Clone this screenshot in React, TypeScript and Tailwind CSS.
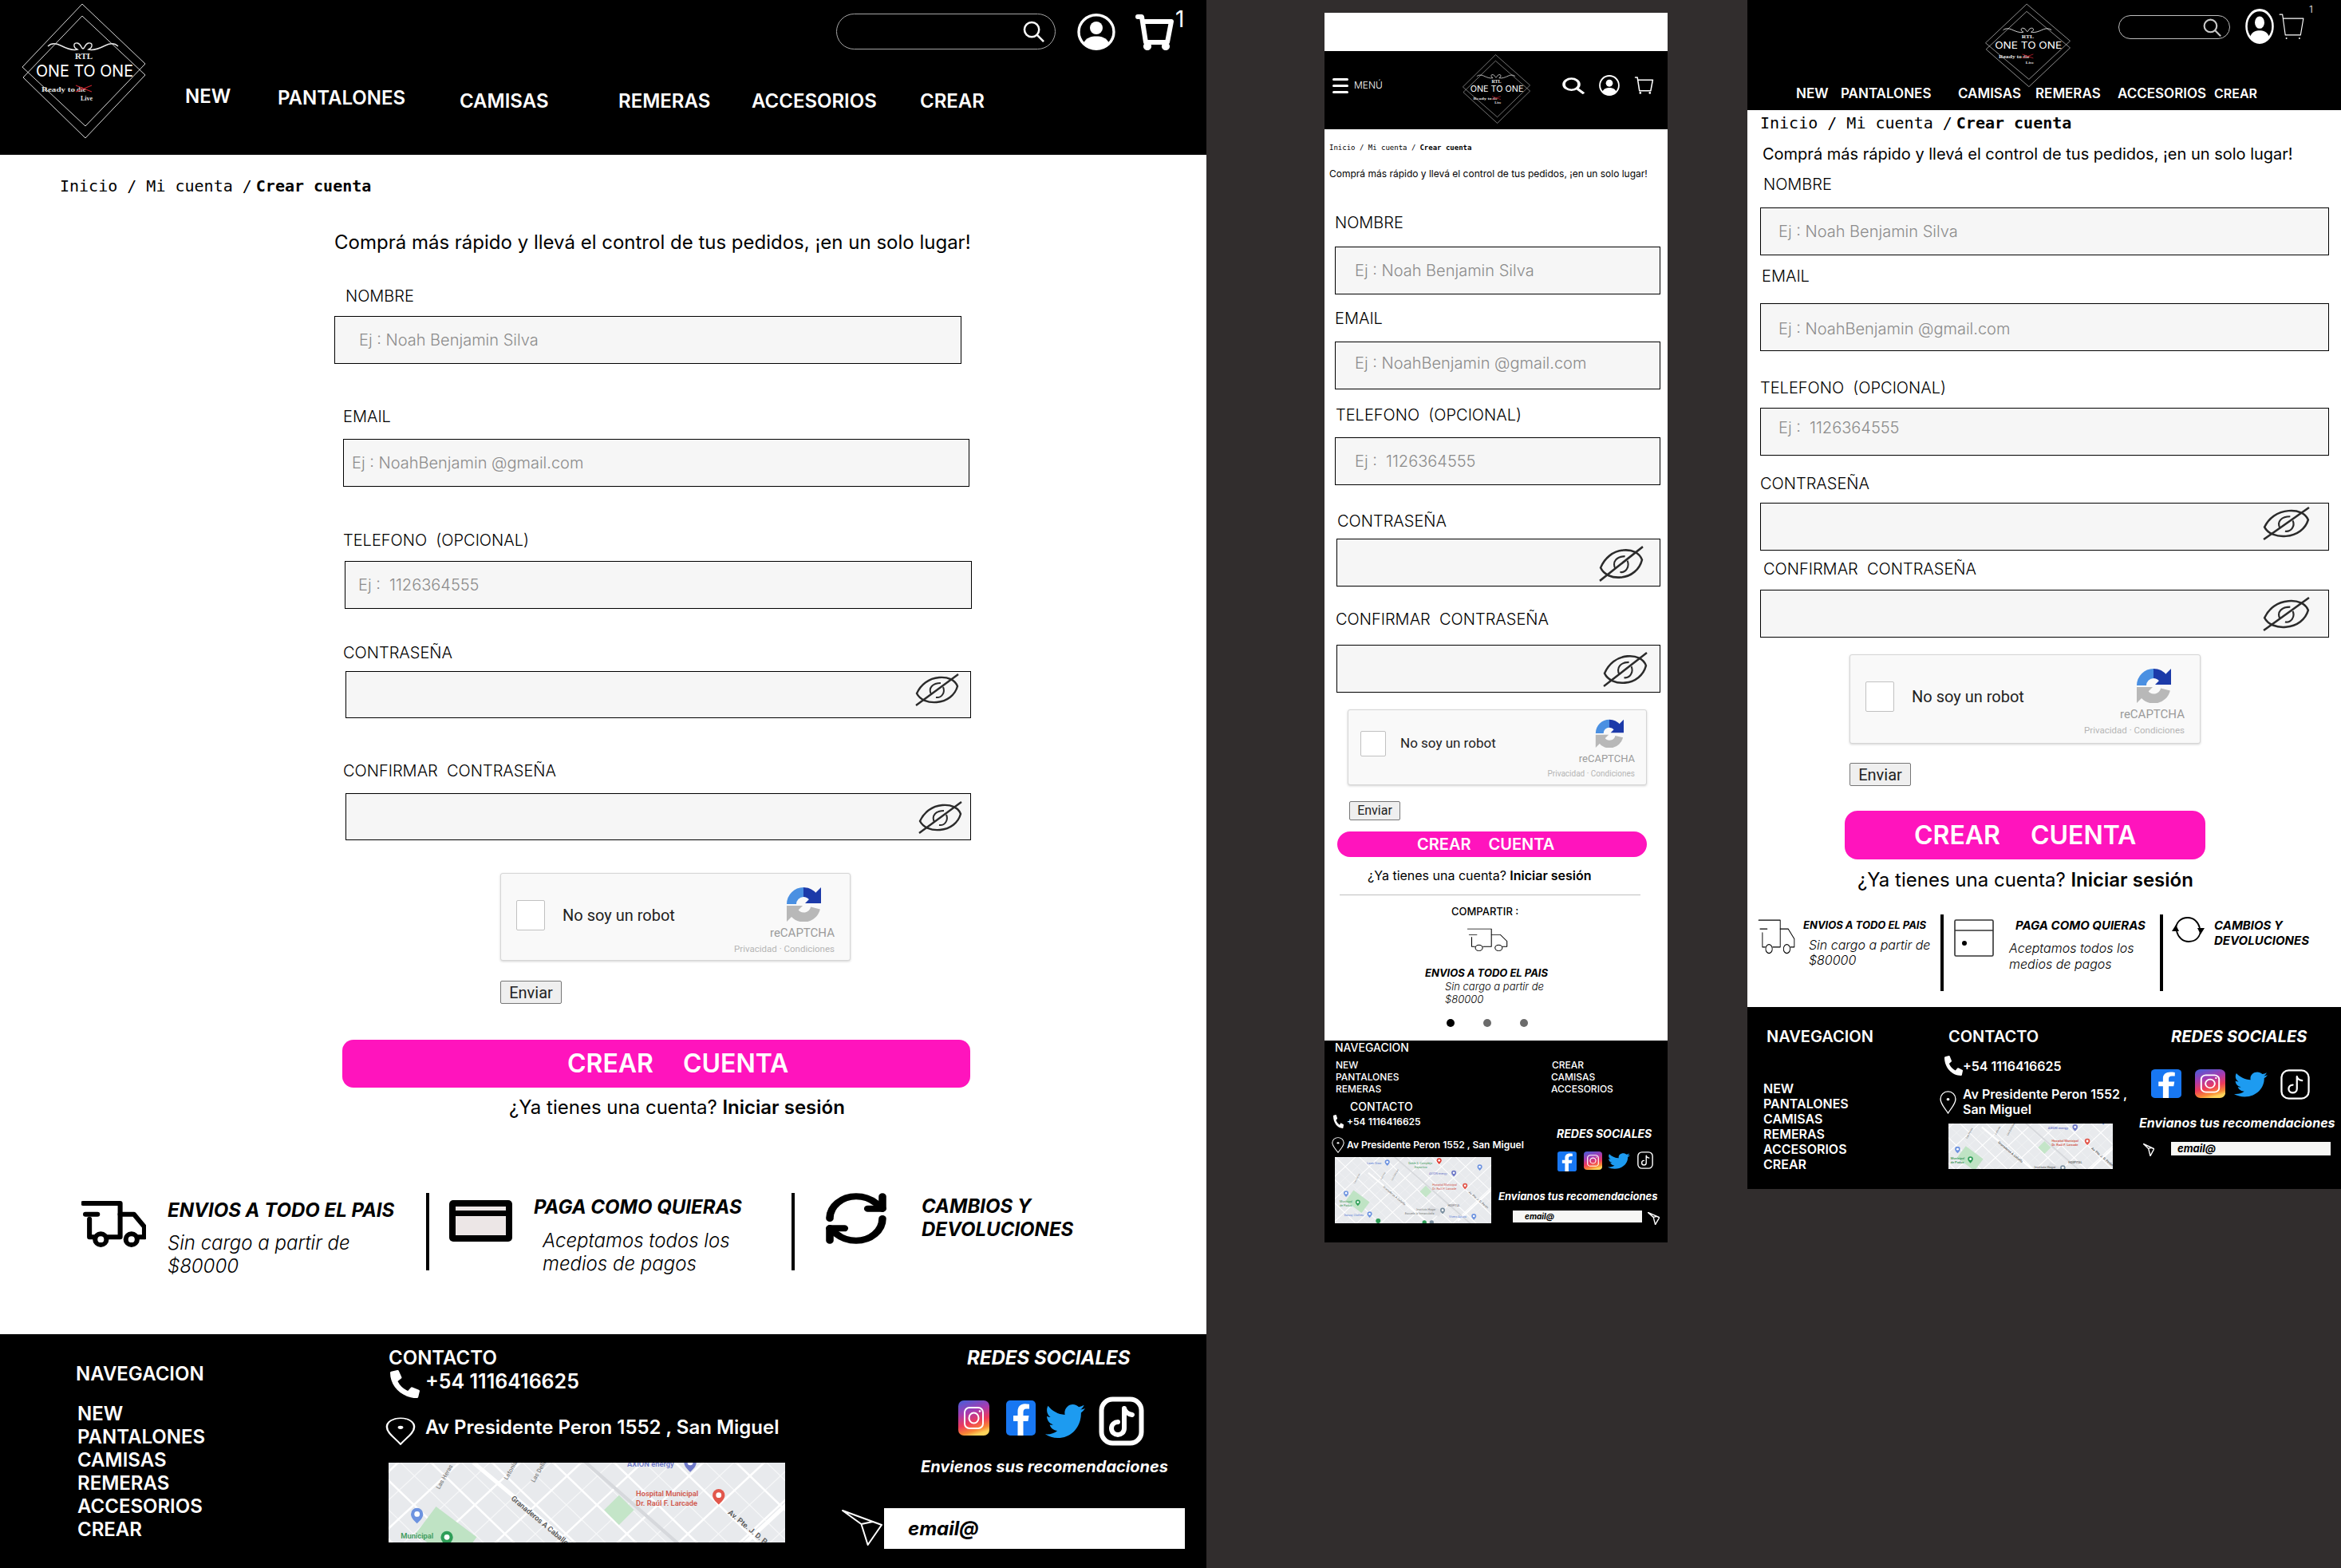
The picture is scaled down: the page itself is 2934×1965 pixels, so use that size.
import { useId } from "react";
import { FaPhoneAlt } from "react-icons/fa";
import { FaTwitter } from "react-icons/fa";
import { RefreshCw } from "lucide-react";

const MONO = "[font-family:'DejaVu_Sans_Mono',monospace]";

function Logo({ className }: { className: string }) {
  return (
    <svg viewBox="0 0 170 180" preserveAspectRatio="none" className={className}>
      <polygon points="83,5 162,80 87,158 8,84" fill="none" stroke="#d8d8d8" strokeWidth="1" />
      <polygon points="83,20 162,94 87,173 9,97" fill="none" stroke="#d8d8d8" strokeWidth="1" />
      <path
        d="M40 58c4-4 10-4 16-1s14 7 21 5c-6-3-5-9 0-8s4 6 7 7c3-1 2-6 7-7s6 5 0 8c7 2 15-2 21-5s12-3 16 1"
        fill="none"
        stroke="#e8e8e8"
        strokeWidth="1.4"
      />
      <text x="85" y="74" textAnchor="middle" fontSize="11" fontWeight="700" fill="#e8e8e8" fontFamily="'Liberation Serif',serif">
        RTL
      </text>
      <text x="86" y="96" textAnchor="middle" fontSize="20" textLength="122" lengthAdjust="spacingAndGlyphs" fill="#fff" fontFamily="'Inter',sans-serif">
        ONE TO ONE
      </text>
      <text x="32" y="115" fontSize="9" fontWeight="700" textLength="42" lengthAdjust="spacingAndGlyphs" fill="#e0e0e0" fontFamily="'Liberation Serif',serif">
        Ready to
      </text>
      <text x="76" y="115" fontSize="9" fontWeight="700" fill="#d8d8d8" fontFamily="'Liberation Serif',serif">
        die
      </text>
      <path d="M75 107l20 8M75 115l20-8" stroke="#c8202c" strokeWidth="1.2" />
      <text x="81" y="126" fontSize="8" fontWeight="700" fill="#e0e0e0" fontFamily="'Liberation Serif',serif">
        Live
      </text>
    </svg>
  );
}

function SearchIcon({ className, width = 2.6, color = "#fff" }: { className: string; width?: number; color?: string }) {
  return (
    <svg viewBox="0 0 28 28" preserveAspectRatio="none" className={className}>
      <circle cx="11.5" cy="11.5" r="9.5" fill="none" stroke={color} strokeWidth={width} />
      <path d="M18 18l9 9" stroke={color} strokeWidth={width} />
    </svg>
  );
}

function UserIcon({ className }: { className: string }) {
  return (
    <svg viewBox="0 0 48 46" preserveAspectRatio="none" className={className}>
      <ellipse cx="24" cy="23" rx="22" ry="21.2" fill="none" stroke="#fff" strokeWidth="3.4" />
      <ellipse cx="24" cy="18" rx="8" ry="8" fill="#fff" />
      <path d="M8 37c3-7 10-8.500 16-8.500s13 1.500 16 8.500c-4 5-10 8-16 8s-12-3-16-8z" fill="#fff" />
    </svg>
  );
}

function CartIcon({ className, width = 5 }: { className: string; width?: number }) {
  return (
    <svg viewBox="0 0 48 46" preserveAspectRatio="none" className={className}>
      <path d="M3 4h5l5 32h27l5-26H10" fill="none" stroke="#fff" strokeWidth={width} strokeLinejoin="round" strokeLinecap="round" />
      <circle cx="15" cy="41" r={width * 0.85} fill="#fff" />
      <circle cx="38" cy="41" r={width * 0.85} fill="#fff" />
    </svg>
  );
}

function EyeOff({ className }: { className: string }) {
  return (
    <svg viewBox="0 0 55 41" preserveAspectRatio="none" className={className}>
      <path d="M2 25c5-11 15-19 28-20 11-1 20 3 23 11-3 11-13 19-26 20C16 37 6 33 2 25z" fill="none" stroke="#2b2b2b" strokeWidth="2.400" />
      <path d="M1 40L54 1" stroke="#2b2b2b" strokeWidth="2.400" />
      <path d="M20 26c-4-8 2-14 12-14M35 17c3 7-2 14-9 13" fill="none" stroke="#2b2b2b" strokeWidth="2" />
    </svg>
  );
}

function TruckIcon({ className, width }: { className: string; width: number }) {
  return (
    <svg viewBox="0 0 80 60" preserveAspectRatio="none" className={className}>
      <g fill="none" stroke="#000" strokeWidth={width} strokeLinecap="round" strokeLinejoin="round">
        <path d="M2 4h46v43H32" />
        <path d="M5 18h15" />
        <path d="M10 24v23h6" />
        <path d="M48 18h17l13 16v13h-8" />
        <circle cx="24" cy="50" r="7" />
        <circle cx="62" cy="50" r="7" />
      </g>
    </svg>
  );
}

function CardSolid({ className }: { className: string }) {
  return (
    <svg viewBox="0 0 79 52" preserveAspectRatio="none" className={className}>
      <rect width="79" height="52" rx="5" fill="#000" />
      <rect x="8" y="8" width="63" height="5" fill="#ece6e6" />
      <rect x="8" y="20" width="63" height="24" fill="#ece6e6" />
    </svg>
  );
}

function CardOutline({ className }: { className: string }) {
  return (
    <svg viewBox="0 0 50 47" preserveAspectRatio="none" className={className}>
      <rect x="1" y="1" width="48" height="45" rx="1.500" fill="none" stroke="#333" strokeWidth="1.600" />
      <path d="M1 14h48" stroke="#333" strokeWidth="1.600" />
      <circle cx="13" cy="30" r="3" fill="#000" />
    </svg>
  );
}

function RefreshThin({ className }: { className: string }) {
  return (
    <svg viewBox="0 0 41 34" preserveAspectRatio="none" className={className}>
      <g fill="none" stroke="#000" strokeWidth="1.800">
        <path d="M5 17c0-9 6-15 15-15 7 0 13 5 15 13" />
        <path d="M36 17c0 9-6 15-15 15-7 0-13-5-15-13" />
      </g>
      <path d="M0 19l5-8 4 8zM32 15l9 0-5 8z" fill="#000" />
    </svg>
  );
}

function Instagram({ className }: { className: string }) {
  const id = useId();
  return (
    <svg viewBox="0 0 39 44" preserveAspectRatio="none" className={className}>
      <defs>
        <linearGradient id={id} x1="0.2" y1="0" x2="0.5" y2="1">
          <stop offset="0" stopColor="#4f5bd5" />
          <stop offset="0.35" stopColor="#a83bb0" />
          <stop offset="0.65" stopColor="#ee3a5a" />
          <stop offset="0.88" stopColor="#f98a35" />
          <stop offset="1" stopColor="#fdd35a" />
        </linearGradient>
      </defs>
      <rect width="39" height="44" rx="7" fill={`url(#${id})`} />
      <rect x="8" y="9" width="23" height="26" rx="6" fill="none" stroke="#fff" strokeWidth="2" />
      <ellipse cx="19.500" cy="22" rx="6" ry="6.500" fill="none" stroke="#fff" strokeWidth="2" />
      <circle cx="27" cy="13.500" r="1.300" fill="#fff" />
    </svg>
  );
}

function Facebook({ className }: { className: string }) {
  return (
    <svg viewBox="0 0 37 44" preserveAspectRatio="none" className={className}>
      <rect width="37" height="44" rx="5" fill="#1877f2" />
      <path d="M21.500 44V26h6l1-7h-7v-4c0-3 1-4.500 4-4.500h3.500V4.800C27 4.500 25 4.300 23.500 4.300 18 4.300 14.500 8 14.500 13.500V19H9v7h5.500v18z" fill="#fff" />
    </svg>
  );
}

function Twitter({ className }: { className: string }) {
  return <FaTwitter className={className} color="#1d9bf0" preserveAspectRatio="none" />;
}

function Tiktok({ className, width }: { className: string; width: number }) {
  return (
    <svg viewBox="0 0 57 62" preserveAspectRatio="none" className={className}>
      <rect x={width / 2 + 0.5} y={width / 2 + 0.5} width={56 - width} height={61 - width} rx="14" fill="none" stroke="#fff" strokeWidth={width} />
      <path
        d="M32 15v25c0 5-4 8-8 8s-8-3-8-8 4-8 8-8M32 15c1 4 5 7 10 8"
        fill="none"
        stroke="#fff"
        strokeWidth={width}
        strokeLinecap="round"
      />
    </svg>
  );
}

function PinIcon({ className }: { className: string }) {
  return (
    <svg viewBox="0 0 20 30" preserveAspectRatio="none" className={className}>
      <path d="M10 29C6 22 1 17 1 10.500 1 5 5 1 10 1s9 4 9 9.500C19 17 14 22 10 29z" fill="none" stroke="#fff" strokeWidth="1.300" />
      <ellipse cx="10" cy="11" rx="1.800" ry="1.800" fill="#fff" />
    </svg>
  );
}

function PlaneIcon({ className, width = 1.6 }: { className: string; width?: number }) {
  return (
    <svg viewBox="0 0 50 45" preserveAspectRatio="none" className={className}>
      <path
        d="M1 1l48 18-17 25-8-26zM24 18l14-3"
        fill="none"
        stroke="#fff"
        strokeWidth={width}
        strokeLinejoin="round"
        vectorEffect="non-scaling-stroke"
      />
    </svg>
  );
}

function RecaptchaLogo({ className }: { className: string }) {
  return (
    <svg viewBox="0 0 44 44" className={className}>
      <path d="M7 22A15 15 0 0 1 22 7" fill="none" stroke="#4a90e2" strokeWidth="12" />
      <path d="M22 7A15 15 0 0 1 34 13" fill="none" stroke="#1c3aa9" strokeWidth="12" />
      <path d="M44 1v20H24z" fill="#1c3aa9" />
      <path d="M37 27A15 15 0 0 1 10 32" fill="none" stroke="#b8b8b8" strokeWidth="12" />
      <path d="M1 44V24h20z" fill="#b8b8b8" />
    </svg>
  );
}

const MAP_LINES = [20, 110, 200, 290, 380, 470, 560, 650, 740];
const MAP_MINOR = [-20, 25, 65, 155, 245, 335, 425, 515, 605, 695, 785];

function MapPin({ x, y, color }: { x: number; y: number; color: string }) {
  return (
    <g transform={`translate(${x} ${y})`}>
      <path d="M0 12C-5 7-9 3-9-2a9 9 0 0 1 18 0C9 3 5 7 0 12z" fill={color} />
      <circle cx="0" cy="-2" r="4" fill="#fff" />
    </g>
  );
}

function MapLabel({ x, y, color, size = 11, rotate, children }: { x: number; y: number; color: string; size?: number; rotate?: number; children: string }) {
  return (
    <text x={x} y={y} fontSize={size} fill={color} fontFamily="'Roboto',sans-serif" transform={rotate ? `rotate(${rotate} ${x} ${y})` : undefined}>
      {children}
    </text>
  );
}

function StreetMap({ className, viewBox }: { className: string; viewBox: string }) {
  return (
    <svg viewBox={viewBox} preserveAspectRatio="xMidYMid slice" className={className}>
      <rect x="0" y="0" width="620" height="280" fill="#e8eaed" />
      <g stroke="#f6f7f8" strokeWidth="1.500">
        {MAP_MINOR.map((x) => (
          <path key={`c${x}`} d={`M${x - 300} -10L${x} 280`} />
        ))}
        {MAP_MINOR.map((x) => (
          <path key={`d${x}`} d={`M${x} -10L${x - 300} 270`} />
        ))}
      </g>
      <g stroke="#fff" strokeWidth="3">
        {MAP_LINES.map((x) => (
          <path key={`a${x}`} d={`M${x - 300} -10L${x} 280`} />
        ))}
        {MAP_LINES.map((x) => (
          <path key={`b${x}`} d={`M${x} -10L${x - 300} 270`} />
        ))}
      </g>
      <path d="M210 -10L540 280" stroke="#d6d8dc" strokeWidth="5" />
      <path d="M135 70L350 250" stroke="#fff" strokeWidth="6" />
      <path d="M470 250L610 120" stroke="#fff" strokeWidth="6" />
      <path d="M350 118l22 22-22 22-22-22z" fill="#c4e5c8" />
      <path d="M80 135l60 45-30 40-60-45z" fill="#bfe3c4" />
      <path d="M370 190l40 22-10 22-45-20z" fill="#dfe1e5" />
      <MapLabel x={130} y={38} color="#5f83d6">Laser Disar</MapLabel>
      <MapPin x={206} y={32} color="#6d93e0" />
      <MapLabel x={285} y={38} color="#3d9a5a">Doble 5 -Complejo</MapLabel>
      <MapLabel x={308} y={52} color="#3d9a5a">Deportivo</MapLabel>
      <MapPin x={400} y={26} color="#e23c32" />
      <MapLabel x={362} y={76} color="#6f79c8">AXION energy</MapLabel>
      <MapPin x={455} y={72} color="#6f79c8" />
      <MapLabel x={375} y={120} color="#d0584c" size={11}>Hospital Municipal</MapLabel>
      <MapLabel x={375} y={134} color="#d0584c" size={11}>Dr. Raúl F. Larcade</MapLabel>
      <MapPin x={497} y={120} color="#e2574c" />
      <MapLabel x={432} y={196} color="#6a6a6a" size={10}>HOSPITAL</MapLabel>
      <MapLabel x={315} y={212} color="#7a7a7a">Instituto Hogar</MapLabel>
      <MapLabel x={272} y={226} color="#7a7a7a">Escuela la Inmaculada</MapLabel>
      <MapPin x={413} y={212} color="#7a8fa0" />
      <MapLabel x={437} y={238} color="#5f83d6">Vivero Aguita</MapLabel>
      <MapPin x={530} y={234} color="#6d93e0" />
      <MapLabel x={45} y={232} color="#5f83d6">Daissy Clothes</MapLabel>
      <MapPin x={140} y={226} color="#6d93e0" />
      <MapLabel x={28} y={182} color="#3d9a5a">Municipal</MapLabel>
      <MapLabel x={28} y={196} color="#3d9a5a">de Padua</MapLabel>
      <MapPin x={96} y={182} color="#2f9e58" />
      <MapPin x={52} y={148} color="#6d93e0" />
      <MapPin x={552} y={50} color="#6d93e0" />
      <MapLabel x={190} y={124} color="#5a5a5a" rotate={40}>Granaderos A Caballo</MapLabel>
      <MapLabel x={510} y={145} color="#5a5a5a" rotate={40}>Av. Pte. J. D. Perón</MapLabel>
      <MapLabel x={85} y={110} color="#8a8a8a" size={9} rotate={-60}>Las Heras</MapLabel>
      <MapLabel x={185} y={96} color="#8a8a8a" size={9} rotate={-60}>Letonia</MapLabel>
      <MapLabel x={225} y={100} color="#8a8a8a" size={9} rotate={-60}>Las Delicias</MapLabel>
      <circle cx="172" cy="250" r="9" fill="#2f9e58" />
      <circle cx="345" cy="256" r="8" fill="#2f9e58" />
      <circle cx="372" cy="256" r="8" fill="#7a8fa0" />
    </svg>
  );
}

function Field({
  label,
  labelClass,
  boxClass,
  placeholder,
  placeholderClass,
  eyeClass,
}: {
  label: string;
  labelClass: string;
  boxClass: string;
  placeholder?: string;
  placeholderClass?: string;
  eyeClass?: string;
}) {
  return (
    <>
      <div className={`h-[24px] text-[20px] leading-[24px] font-light whitespace-pre text-black ${labelClass}`}>{label}</div>
      <div className={`relative flex h-[60px] items-center border border-black bg-[#f6f6f6] ${boxClass}`}>
        {placeholder && <span className={`text-[20px] font-light whitespace-pre text-[#8c8c8c] ${placeholderClass}`}>{placeholder}</span>}
        {eyeClass && <EyeOff className={`absolute ${eyeClass}`} />}
      </div>
    </>
  );
}

function Captcha({ small, className }: { small?: boolean; className: string }) {
  return (
    <div className={`relative rounded-[3px] border border-[#d6d6d6] bg-[#f9f9f9] shadow-[0_1px_3px_rgba(0,0,0,0.18)] ${className}`}>
      <div className={`flex items-center ${small ? "h-[84px] pl-[15px]" : "h-[104px] pl-[19px]"}`}>
        <div className={`rounded-[2px] border border-[#c1c1c1] bg-white ${small ? "h-[32px] w-[32px]" : "h-[38px] w-[36px]"}`} />
        <span className={`[font-family:Roboto,sans-serif] text-[#222] ${small ? "ml-[18px] text-[17px]" : "ml-[22px] text-[20px]"}`}>No soy un robot</span>
      </div>
      <div className={`absolute flex flex-col items-center text-[#9b9b9b] [font-family:Roboto,sans-serif] ${small ? "top-[11px] right-[14px]" : "top-[16px] right-[19px]"}`}>
        <RecaptchaLogo className={`self-end ${small ? "mr-[14px] h-[36px] w-[36px]" : "mr-[17px] h-[44px] w-[44px]"}`} />
        <span className={`self-end ${small ? "mt-[4px] text-[13px]" : "mt-[3px] text-[15px]"}`}>reCAPTCHA</span>
        <span className={`self-end whitespace-nowrap text-[#b5b5b5] ${small ? "mt-[1px] text-[10px]" : "mt-0 text-[11.5px]"}`}>Privacidad · Condiciones</span>
      </div>
    </div>
  );
}

function Enviar({ className }: { className: string }) {
  return (
    <div className={`flex items-center justify-center rounded-[2px] border border-[#767676] bg-[#efefef] [font-family:Roboto,sans-serif] text-[#222] ${className}`}>
      Enviar
    </div>
  );
}

function Breadcrumb({ className }: { className: string }) {
  return (
    <div className={`${MONO} whitespace-pre text-black ${className}`}>
      Inicio / Mi cuenta /<span className="ml-[5px] font-bold">Crear cuenta</span>
    </div>
  );
}

function Desktop() {
  return (
    <div className="h-[1965px] w-[1512px] shrink-0 bg-white text-black">
      <header className="flex h-[194px] bg-black text-white">
        <Logo className="ml-[20px] h-[180px] w-[170px] shrink-0" />
        <div className="ml-[42px] flex flex-col">
          <div className="mt-[17px] ml-[816px] flex items-start">
            <div className="flex h-[45px] w-[275px] items-center justify-end rounded-full border border-[#a5a5a5] pr-[13px]">
              <SearchIcon className="h-[27px] w-[27px]" />
            </div>
            <UserIcon className="ml-[27px] h-[46px] w-[48px]" />
            <CartIcon className="ml-[25px] h-[46px] w-[48px]" width={6} />
            <span className="-mt-[10px] ml-[2px] text-[28px] leading-[34px]">1</span>
          </div>
          <nav className="mt-[46px] flex items-start text-[24px] leading-[24px] font-semibold">
            <span className="w-[116px]">NEW</span>
            <span className="mt-[2px] w-[228px]">PANTALONES</span>
            <span className="mt-[6px] w-[199px]">CAMISAS</span>
            <span className="mt-[6px] w-[167px]">REMERAS</span>
            <span className="mt-[6px] w-[211px]">ACCESORIOS</span>
            <span className="mt-[6px]">CREAR</span>
          </nav>
        </div>
      </header>

      <Breadcrumb className="mt-[27px] ml-[75px] h-[24px] text-[20px] leading-[24px]" />
      <p className="mt-[44px] ml-[419px] h-[30px] text-[24px] leading-[30px]">Comprá más rápido y llevá el control de tus pedidos, ¡en un solo lugar!</p>

      <Field label="NOMBRE" labelClass="mt-[40px] ml-[433px]" boxClass="mt-[13px] ml-[419px] w-[786px]" placeholder="Ej : Noah Benjamin Silva" placeholderClass="ml-[30px]" />
      <Field label="EMAIL" labelClass="mt-[54px] ml-[430px]" boxClass="mt-[16px] ml-[430px] w-[785px]" placeholder="Ej : NoahBenjamin @gmail.com" placeholderClass="ml-[10px]" />
      <Field label="TELEFONO  (OPCIONAL)" labelClass="mt-[55px] ml-[430px]" boxClass="mt-[14px] ml-[432px] w-[786px]" placeholder="Ej :  1126364555" placeholderClass="ml-[16px]" />
      <Field label="CONTRASEÑA" labelClass="mt-[43px] ml-[430px]" boxClass="mt-[11px] ml-[433px] !h-[59px] w-[784px]" eyeClass="top-[2px] right-[14px] h-[41px] w-[55px]" />
      <Field label="CONFIRMAR  CONTRASEÑA" labelClass="mt-[54px] ml-[430px]" boxClass="mt-[16px] ml-[433px] !h-[59px] w-[784px]" eyeClass="top-[9px] right-[10px] h-[41px] w-[55px]" />

      <Captcha className="mt-[41px] ml-[627px] h-[110px] w-[439px]" />
      <Enviar className="mt-[25px] ml-[627px] h-[29px] w-[77px] text-[20px]" />
      <div className="mt-[45px] ml-[429px] flex h-[60px] w-[787px] items-center rounded-[14px] bg-[#ff14bd] pl-[282px] text-[32px] font-semibold text-white">
        <span>CREAR</span>
        <span className="ml-[37px]">CUENTA</span>
      </div>
      <p className="mt-[10px] ml-[638px] h-[30px] text-[24px] leading-[30px]">
        ¿Ya tienes una cuenta? <b className="font-semibold">Iniciar sesión</b>
      </p>

      <section className="mt-[92px] flex h-[97px] items-start pl-[102px]">
        <div className="flex w-[432px]">
          <TruckIcon className="mt-[9px] h-[59px] w-[81px]" width={6} />
          <div className="ml-[27px]">
            <h4 className="mt-[8px] text-[24px] leading-[28px] font-bold italic">ENVIOS A TODO EL PAIS</h4>
            <p className="mt-[12px] w-[270px] text-[24px] leading-[29px] font-light italic">Sin cargo a partir de $80000</p>
          </div>
        </div>
        <div className="h-[97px] w-[4px] bg-black" />
        <div className="flex w-[454px] pl-[25px]">
          <CardSolid className="mt-[9px] h-[52px] w-[79px]" />
          <div>
            <h4 className="mt-[4px] ml-[27px] text-[24px] leading-[28px] font-bold italic">PAGA COMO QUIERAS</h4>
            <p className="mt-[13px] ml-[38px] w-[270px] text-[24px] leading-[29px] font-light italic">Aceptamos todos los medios de pagos</p>
          </div>
        </div>
        <div className="h-[97px] w-[4px] bg-black" />
        <div className="flex pl-[33px]">
          <RefreshCw className="-mt-[5px] h-[74px] w-[88px]" strokeWidth={2.6} preserveAspectRatio="none" />
          <h4 className="mt-[2px] ml-[38px] text-[24px] leading-[29px] font-bold italic">
            CAMBIOS Y
            <br />
            DEVOLUCIONES
          </h4>
        </div>
      </section>

      <footer className="mt-[80px] flex h-[293px] bg-black text-white">
        <div className="w-[487px] pt-[35px] pl-[95px] text-[24px] font-semibold">
          <div className="h-[30px] leading-[30px]">NAVEGACION</div>
          <ul className="mt-[20px] ml-[2px] leading-[29px]">
            <li>NEW</li>
            <li>PANTALONES</li>
            <li>CAMISAS</li>
            <li>REMERAS</li>
            <li>ACCESORIOS</li>
            <li>CREAR</li>
          </ul>
        </div>
        <div className="w-[568px] pt-[15px] text-[24px] font-semibold">
          <div className="h-[30px] leading-[30px]">CONTACTO</div>
          <div className="flex h-[35px] items-start">
            <FaPhoneAlt className="ml-[2px] h-[35px] w-[37px]" preserveAspectRatio="none" />
            <span className="ml-[7px] text-[25px] leading-[28px]">+54 1116416625</span>
          </div>
          <div className="mt-[24px] flex h-[35px] items-start">
            <PinIcon className="-ml-[4px] h-[35px] w-[38px]" />
            <span className="ml-[12px] leading-[26px]">Av Presidente Peron 1552 , San Miguel</span>
          </div>
          <StreetMap className="mt-[22px] h-[100px] w-[497px]" viewBox="10 70 585 118" />
        </div>
        <div className="w-[430px] pt-[15px]">
          <div className="ml-[157px] h-[30px] text-[24px] leading-[30px] font-bold italic">REDES SOCIALES</div>
          <div className="mt-[33px] flex items-start">
            <Instagram className="mt-[5px] ml-[146px] h-[44px] w-[39px]" />
            <Facebook className="mt-[5px] ml-[21px] h-[44px] w-[37px]" />
            <Twitter className="mt-[5px] ml-[12px] h-[52px] w-[50px]" />
            <Tiktok className="ml-[17px] h-[62px] w-[57px]" width={6} />
          </div>
          <div className="mt-[13px] ml-[99px] h-[26px] text-[20px] leading-[26px] font-bold whitespace-nowrap italic">Envienos sus recomendaciones</div>
          <div className="mt-[39px] flex items-start">
            <PlaneIcon className="mt-[2px] h-[45px] w-[51px]" width={2} />
            <div className="ml-[2px] flex h-[51px] w-[377px] items-center bg-white pl-[30px] text-[24px] font-bold text-black italic">email@</div>
          </div>
        </div>
      </footer>
    </div>
  );
}

function Phone() {
  return (
    <div className="mt-[16px] ml-[148px] h-[1541px] w-[430px] shrink-0 bg-white text-black">
      <div className="h-[48px]" />
      <header className="flex h-[98px] items-center bg-black pb-[12px] text-white">
        <div className="flex w-[169px] items-center pl-[10px]">
          <div className="flex h-[19px] w-[20px] flex-col justify-between">
            <div className="h-[3px] rounded bg-white" />
            <div className="h-[3px] rounded bg-white" />
            <div className="h-[3px] rounded bg-white" />
          </div>
          <span className="ml-[7px] text-[12px] font-light">MENÚ</span>
        </div>
        <Logo className="mt-[2px] h-[92px] w-[93px] shrink-0 self-start" />
        <SearchIcon className="ml-[36px] h-[21px] w-[28px]" width={3.6} />
        <UserIcon className="ml-[18px] h-[26px] w-[26px]" />
        <CartIcon className="ml-[18px] h-[24px] w-[25px]" width={3} />
      </header>

      <Breadcrumb className="mt-[16px] ml-[6px] h-[14px] text-[9px] leading-[14px]" />
      <p className="mt-[18px] ml-[6px] h-[16px] text-[12px] leading-[16px]">Comprá más rápido y llevá el control de tus pedidos, ¡en un solo lugar!</p>

      <Field label="NOMBRE" labelClass="mt-[41px] ml-[13px]" boxClass="mt-[18px] ml-[13px] w-[408px]" placeholder="Ej : Noah Benjamin Silva" placeholderClass="ml-[24px]" />
      <Field label="EMAIL" labelClass="mt-[18px] ml-[13px]" boxClass="mt-[17px] ml-[13px] w-[408px]" placeholder="Ej : NoahBenjamin @gmail.com" placeholderClass="ml-[24px] mb-[6px]" />
      <Field label="TELEFONO  (OPCIONAL)" labelClass="mt-[20px] ml-[14px]" boxClass="mt-[16px] ml-[13px] w-[408px]" placeholder="Ej :  1126364555" placeholderClass="ml-[24px]" />
      <Field label="CONTRASEÑA" labelClass="mt-[33px] ml-[16px]" boxClass="mt-[10px] ml-[15px] w-[406px]" eyeClass="top-[8px] right-[20px] h-[45px] w-[56px]" />
      <Field label="CONFIRMAR  CONTRASEÑA" labelClass="mt-[29px] ml-[14px]" boxClass="mt-[20px] ml-[15px] w-[406px]" eyeClass="top-[8px] right-[15px] h-[44px] w-[56px]" />

      <Captcha small className="mt-[21px] ml-[29px] h-[95px] w-[375px]" />
      <Enviar className="mt-[20px] ml-[31px] h-[24px] w-[64px] text-[16px]" />
      <div className="mt-[14px] ml-[16px] flex h-[32px] w-[388px] items-center rounded-[16px] bg-[#ff14bd] pl-[100px] text-[20px] font-semibold text-white">
        <span>CREAR</span>
        <span className="ml-[22px]">CUENTA</span>
      </div>
      <p className="mt-[13px] ml-[54px] h-[20px] text-[16px] leading-[20px]">
        ¿Ya tienes una cuenta? <b className="font-semibold">Iniciar sesión</b>
      </p>
      <div className="mt-[14px] ml-[19px] h-px w-[377px] bg-[#c0c0c0]" />
      <div className="mt-[12px] ml-[159px] h-[16px] text-[13px] leading-[16px] font-medium">COMPARTIR :</div>
      <TruckIcon className="mt-[12px] ml-[178px] h-[31px] w-[52px]" width={1.6} />
      <div className="mt-[18px] ml-[126px] h-[16px] text-[13px] leading-[16px] font-bold italic">ENVIOS A TODO EL PAIS</div>
      <p className="mt-px ml-[151px] w-[130px] text-[13px] leading-[16px] font-light italic">Sin cargo a partir de $80000</p>
      <div className="mt-[17px] ml-[153px] flex gap-[36px]">
        <div className="h-[10px] w-[10px] rounded-full bg-black" />
        <div className="h-[10px] w-[10px] rounded-full bg-[#6b6b6b]" />
        <div className="h-[10px] w-[10px] rounded-full bg-[#6b6b6b]" />
      </div>

      <footer className="mt-[17px] h-[253px] bg-black text-white">
        <div className="ml-[13px] h-[18px] text-[14px] leading-[18px] font-medium">NAVEGACION</div>
        <div className="mt-[5px] flex h-[45px] text-[12px] leading-[15px] font-medium">
          <ul className="ml-[14px] w-[270px]">
            <li>NEW</li>
            <li>PANTALONES</li>
            <li>REMERAS</li>
          </ul>
          <ul>
            <li className="ml-px">CREAR</li>
            <li>CAMISAS</li>
            <li>ACCESORIOS</li>
          </ul>
        </div>
        <div className="mt-[6px] flex">
          <div className="w-[218px]">
            <div className="ml-[32px] h-[18px] text-[14px] leading-[18px] font-medium">CONTACTO</div>
            <div className="mt-px flex h-[17px] items-center text-[12px] font-semibold">
              <FaPhoneAlt className="ml-[11px] h-[17px] w-[13px]" preserveAspectRatio="none" />
              <span className="ml-[4px]">+54 1116416625</span>
            </div>
            <div className="mt-[11px] flex h-[20px] items-center text-[12px] font-semibold whitespace-nowrap">
              <PinIcon className="ml-[9px] h-[20px] w-[16px] shrink-0" />
              <span className="ml-[3px]">Av Presidente Peron 1552 , San Miguel</span>
            </div>
            <StreetMap className="mt-[5px] ml-[13px] h-[83px] w-[196px]" viewBox="10 10 585 250" />
          </div>
          <div>
            <div className="mt-[35px] ml-[73px] h-[16px] text-[14px] leading-[16px] font-bold whitespace-nowrap italic">REDES SOCIALES</div>
            <div className="mt-[14px] flex h-[25px]">
              <Facebook className="ml-[74px] h-[25px] w-[24px]" />
              <Instagram className="ml-[9px] h-[23px] w-[23px]" />
              <Twitter className="ml-[7px] h-[24px] w-[28px]" />
              <Tiktok className="ml-[9px] h-[22px] w-[20px]" width={4} />
            </div>
            <div className="mt-[23px] h-[16px] text-[13px] leading-[16px] font-bold whitespace-nowrap italic">Envianos tus recomendaciones</div>
            <div className="mt-[10px] ml-[18px] flex items-start">
              <div className="flex h-[15px] w-[162px] items-center bg-[#f7f7f5] pl-[15px] text-[10px] font-bold text-black italic">email@</div>
              <PlaneIcon className="mt-[2px] ml-[7px] h-[16px] w-[15px]" width={1.4} />
            </div>
          </div>
        </div>
      </footer>
    </div>
  );
}

function Tablet() {
  return (
    <div className="ml-[100px] h-[1490px] w-[744px] shrink-0 bg-white text-black">
      <header className="h-[138px] bg-black text-white">
        <div className="flex h-[105px] items-start pl-[293px]">
          <Logo className="mt-[2px] h-[111px] w-[117px] shrink-0" />
          <div className="mt-[19px] ml-[55px] flex h-[30px] w-[140px] items-center justify-end rounded-full border border-[#bdbdbd] pr-[10px]">
            <SearchIcon className="h-[23px] w-[23px]" color="#c9c9c9" />
          </div>
          <UserIcon className="mt-[11px] ml-[19px] h-[44px] w-[36px]" />
          <CartIcon className="mt-[15px] ml-[5px] h-[37px] w-[34px]" width={1.6} />
          <span className="mt-[4px] ml-[5px] text-[12px] leading-[16px] font-light">1</span>
        </div>
        <nav className="flex pl-[61px] text-[17px] leading-[24px] font-semibold">
          <span className="w-[56px]">NEW</span>
          <span className="w-[147px]">PANTALONES</span>
          <span className="w-[97px]">CAMISAS</span>
          <span className="w-[103px]">REMERAS</span>
          <span className="w-[121px]">ACCESORIOS</span>
          <span className="text-[16px]">CREAR</span>
        </nav>
      </header>

      <Breadcrumb className="mt-[4px] ml-[16px] h-[24px] text-[20px] leading-[24px]" />
      <p className="mt-[14px] ml-[19px] h-[26px] text-[20px] leading-[26px]">Comprá más rápido y llevá el control de tus pedidos, ¡en un solo lugar!</p>

      <Field label="NOMBRE" labelClass="mt-[13px] ml-[20px]" boxClass="mt-[17px] ml-[16px] w-[713px]" placeholder="Ej : Noah Benjamin Silva" placeholderClass="ml-[22px]" />
      <Field label="EMAIL" labelClass="mt-[14px] ml-[18px]" boxClass="mt-[22px] ml-[16px] w-[713px]" placeholder="Ej : NoahBenjamin @gmail.com" placeholderClass="ml-[22px] mt-[3px]" />
      <Field label="TELEFONO  (OPCIONAL)" labelClass="mt-[34px] ml-[16px]" boxClass="mt-[13px] ml-[16px] w-[713px]" placeholder="Ej :  1126364555" placeholderClass="ml-[22px] mb-[10px]" />
      <Field label="CONTRASEÑA" labelClass="mt-[23px] ml-[16px]" boxClass="mt-[12px] ml-[16px] w-[713px]" eyeClass="top-[4px] right-[23px] h-[42px] w-[59px]" />
      <Field label="CONFIRMAR  CONTRASEÑA" labelClass="mt-[11px] ml-[20px]" boxClass="mt-[14px] ml-[16px] w-[713px]" eyeClass="top-[8px] right-[23px] h-[43px] w-[59px]" />

      <Captcha className="mt-[21px] ml-[128px] h-[112px] w-[440px]" />
      <Enviar className="mt-[24px] ml-[128px] h-[29px] w-[77px] text-[20px]" />
      <div className="mt-[31px] ml-[122px] flex h-[61px] w-[452px] items-center rounded-[16px] bg-[#ff14bd] pl-[87px] text-[32px] font-semibold text-white">
        <span>CREAR</span>
        <span className="ml-[38px]">CUENTA</span>
      </div>
      <p className="mt-[11px] ml-[138px] h-[30px] text-[24px] leading-[30px]">
        ¿Ya tienes una cuenta? <b className="font-semibold">Iniciar sesión</b>
      </p>

      <section className="mt-[28px] ml-[13px] flex h-[96px] items-start">
        <div className="flex w-[229px]">
          <TruckIcon className="mt-[4px] h-[47px] w-[52px]" width={1.6} />
          <div className="ml-[10px]">
            <h4 className="mt-[5px] h-[16px] text-[13px] leading-[16px] font-bold whitespace-nowrap italic">ENVIOS A TODO EL PAIS</h4>
            <p className="mt-[8px] ml-[7px] w-[165px] text-[16px] leading-[19px] font-light italic">Sin cargo a partir de $80000</p>
          </div>
        </div>
        <div className="h-[96px] w-[4px] bg-black" />
        <div className="flex w-[271px]">
          <CardOutline className="mt-[6px] ml-[13px] h-[47px] w-[50px]" />
          <div>
            <h4 className="mt-[6px] ml-[27px] h-[16px] text-[15px] leading-[16px] font-bold whitespace-nowrap italic">PAGA COMO QUIERAS</h4>
            <p className="mt-[10px] ml-[19px] w-[180px] text-[16px] leading-[20px] font-light italic">Aceptamos todos los medios de pagos</p>
          </div>
        </div>
        <div className="h-[96px] w-[4px] bg-black" />
        <div className="flex">
          <RefreshThin className="mt-[2px] ml-[11px] h-[34px] w-[41px]" />
          <h4 className="mt-[4px] ml-[12px] text-[15px] leading-[19px] font-bold whitespace-nowrap italic">
            CAMBIOS Y
            <br />
            DEVOLUCIONES
          </h4>
        </div>
      </section>

      <footer className="mt-[20px] flex h-[228px] bg-black pt-[24px] text-white">
        <div className="w-[241px] text-[16px] font-semibold">
          <div className="ml-[24px] h-[26px] text-[20px] leading-[26px]">NAVEGACION</div>
          <ul className="mt-[43px] ml-[20px] leading-[19px]">
            <li>NEW</li>
            <li>PANTALONES</li>
            <li>CAMISAS</li>
            <li>REMERAS</li>
            <li>ACCESORIOS</li>
            <li>CREAR</li>
          </ul>
        </div>
        <div className="w-[250px] text-[16px] font-semibold">
          <div className="ml-[11px] h-[26px] text-[20px] leading-[26px]">CONTACTO</div>
          <div className="mt-[11px] flex h-[25px] items-center">
            <FaPhoneAlt className="ml-[6px] h-[25px] w-[23px]" preserveAspectRatio="none" />
            <span>+54 1116416625</span>
          </div>
          <div className="mt-[14px] flex items-center leading-[19px]">
            <PinIcon className="h-[29px] w-[21px] shrink-0" />
            <span className="ml-[8px]">
              Av Presidente Peron 1552 ,
              <br />
              San Miguel
            </span>
          </div>
          <StreetMap className="mt-[8px] ml-[11px] h-[57px] w-[206px]" viewBox="10 58 585 156" />
        </div>
        <div className="w-[253px]">
          <div className="ml-[40px] h-[26px] text-[20px] leading-[26px] font-bold whitespace-nowrap italic">REDES SOCIALES</div>
          <div className="mt-[28px] flex h-[39px]">
            <Facebook className="ml-[15px] h-[36px] w-[38px]" />
            <Instagram className="ml-[17px] h-[36px] w-[38px]" />
            <Twitter className="ml-[11px] h-[38px] w-[42px]" />
            <Tiktok className="ml-[16px] h-[38px] w-[37px]" width={3.500} />
          </div>
          <div className="mt-[18px] h-[20px] text-[16px] leading-[20px] font-bold whitespace-nowrap italic">Envianos tus recomendaciones</div>
          <div className="mt-[14px] flex items-start">
            <PlaneIcon className="mt-[2px] ml-[5px] h-[16px] w-[14px]" width={1.4} />
            <div className="ml-[21px] flex h-[17px] w-[200px] items-center bg-[#f7f7f5] pl-[8px] text-[13px] font-bold text-black italic">email@</div>
          </div>
        </div>
      </footer>
    </div>
  );
}

export default function App() {
  return (
    <div className="flex h-[1965px] w-[2934px] items-start overflow-hidden bg-[#312d2d] [font-family:Inter,sans-serif]">
      <Desktop />
      <Phone />
      <Tablet />
    </div>
  );
}
